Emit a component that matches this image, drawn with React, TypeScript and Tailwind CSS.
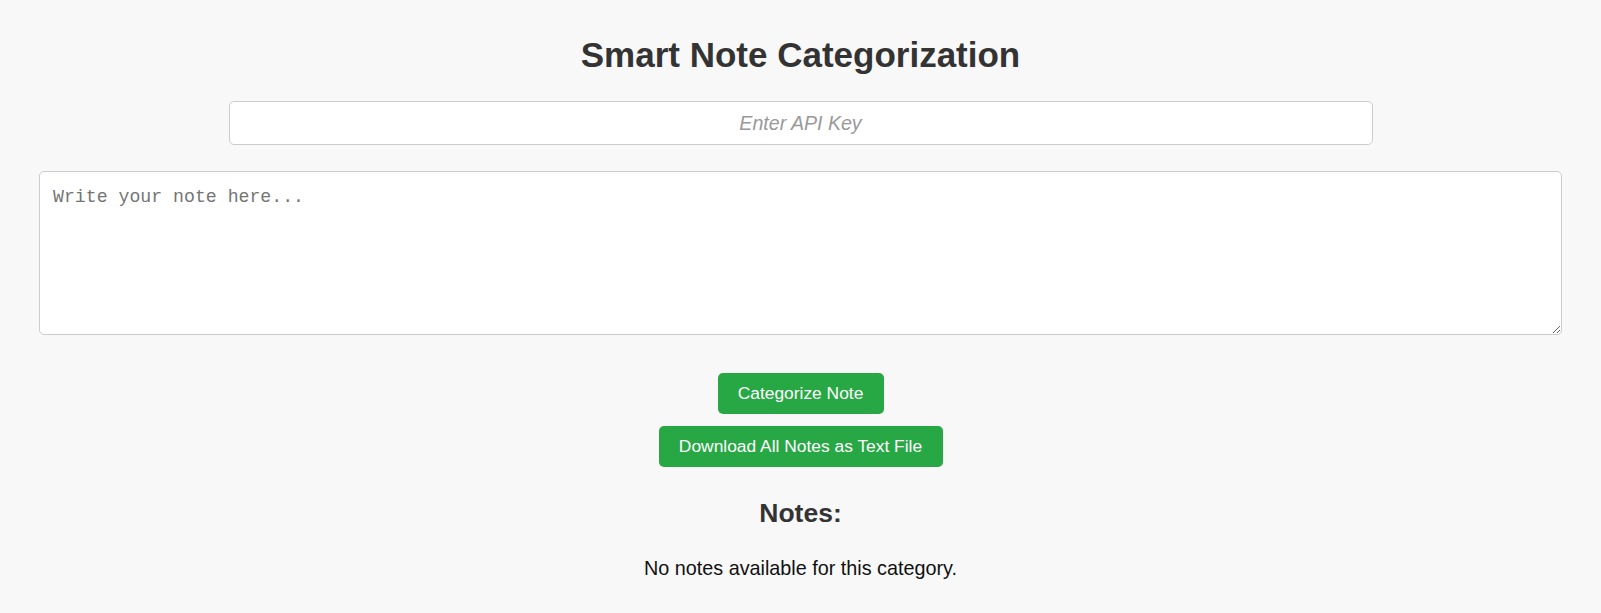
import React, { useState } from 'react';

type Note = { text: string; category: string };

export default function App() {
  const [apiKey, setApiKey] = useState('');
  const [note, setNote] = useState('');
  const [notes] = useState<Note[]>([]);

  // Shared button look
  const btn =
    "h-[41px] rounded-[5px] bg-[#28a745] text-white text-[17.4px] leading-none flex items-center justify-center";

  return (
    <div className="min-h-screen bg-[#f8f8f8] px-[39px] pt-[35px] font-['Liberation_Sans',Arial,sans-serif]">
      <h1 className="h-[40px] text-center text-[35px] font-bold leading-[40px] text-[#333]">
        Smart Note Categorization
      </h1>

      <div className="mt-[26px] flex justify-center">
        <input
          type="text"
          value={apiKey}
          onChange={(e) => setApiKey(e.target.value)}
          placeholder="Enter API Key"
          className="h-[44px] w-[1144px] rounded-[5px] border border-[#ccc] bg-white text-center text-[19.6px] italic text-[#333] outline-none placeholder:text-[#999]"
        />
      </div>

      <textarea
        value={note}
        onChange={(e) => setNote(e.target.value)}
        placeholder="Write your note here..."
        className="mt-[26px] block h-[164px] w-full rounded-[5px] border border-[#ccc] bg-white px-[13px] pt-[15px] pb-[10px] font-['Liberation_Mono',monospace] text-[18.2px] leading-[21px] text-[#333] outline-none placeholder:text-[#757575]"
      />

      <div className="mt-[38px] flex flex-col items-center gap-[12px]">
        <button className={`${btn} w-[166px]`}>Categorize Note</button>
        <button className={`${btn} w-[284px]`}>Download All Notes as Text File</button>
      </div>

      <h2 className="mt-[31px] text-center text-[26.5px] font-bold leading-[30px] text-[#333]">
        Notes:
      </h2>

      <div className="mt-[29px] text-center text-[19.8px] leading-[23px] text-[#111]">
        {notes.length === 0 ? (
          <p>No notes available for this category.</p>
        ) : (
          notes.map((n, i) => <p key={i}>{n.text}</p>)
        )}
      </div>
    </div>
  );
}
